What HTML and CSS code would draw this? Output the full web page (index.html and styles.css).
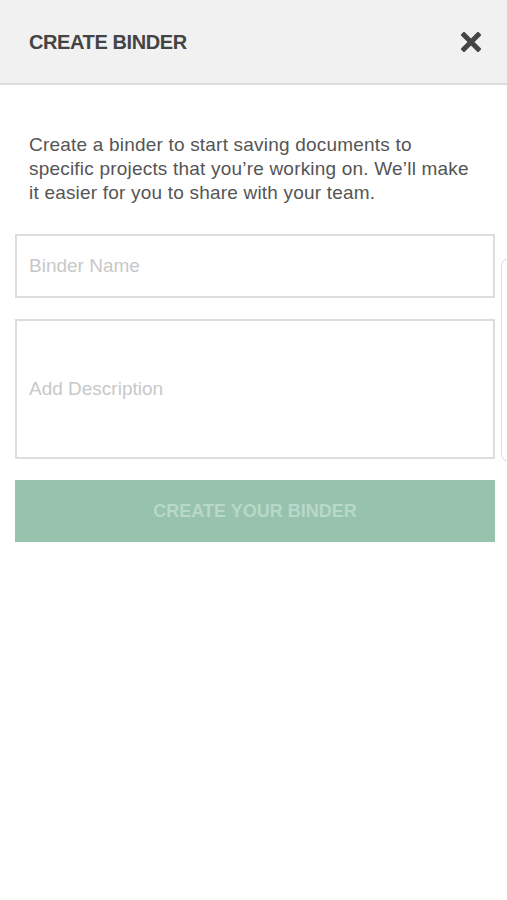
FILE: index.html
```html
<!DOCTYPE html>
<html lang="en">
<head>
    <meta charset="UTF-8">
    <meta name="viewport" content="width=device-width, initial-scale=1.0">
    <title>Create Binder</title>
    <link rel="stylesheet" href="styles.css">
</head>
<body>
    <header class="modal-header">
        <h1>CREATE BINDER</h1>
        <button class="close-btn" aria-label="Close">
            <svg width="20" height="20" viewBox="0 0 20 20">
                <path d="M3 3 L17 17 M17 3 L3 17" stroke="#444" stroke-width="5" stroke-linecap="square" fill="none"/>
            </svg>
        </button>
    </header>

    <form id="binderForm" class="binder-form">
        <p class="intro">Create a binder to start saving documents to<br>specific projects that you’re working on. We’ll make<br>it easier for you to share with your team.</p>

        <input type="text" id="binderName" placeholder="Binder Name">
        <div class="desc-box">
            <textarea id="binderDesc" placeholder="Add Description"></textarea>
        </div>

        <button type="submit" class="submit-btn">CREATE YOUR BINDER</button>
    </form>

    <div class="peek-card"></div>
</body>
</html>
```

FILE: styles.css
```css
body {
  margin: 0;
  background: #fff;
  font-family: "Liberation Sans", Arial, sans-serif;
  color: #555;
}

.modal-header {
  height: 83px;
  background: #f1f1f1;
  border-bottom: 2px solid #dcdcdc;
  display: flex;
  align-items: center;
  justify-content: space-between;
  padding: 0 26px 0 29px;
}

.modal-header h1 {
  margin: 2px 0 0 0;
  font-size: 20px;
  font-weight: bold;
  color: #444;
  letter-spacing: -0.4px;
}

.close-btn {
  background: none;
  border: none;
  padding: 0;
  width: 20px;
  height: 20px;
  cursor: pointer;
}

.binder-form {
  padding: 0 12px 0 15px;
  display: flex;
  flex-direction: column;
  gap: 21px;
}

.intro {
  margin: 48px 0 8px 14px;
  font-size: 19px;
  line-height: 24px;
  letter-spacing: 0.2px;
  color: #555;
  white-space: nowrap;
}

.binder-form input {
  height: 64px;
  box-sizing: border-box;
  border: 2px solid #ddd;
  padding: 0 12px;
  font-family: inherit;
  font-size: 19px;
  color: #555;
  outline: none;
}

.desc-box {
  height: 140px;
  box-sizing: border-box;
  border: 2px solid #ddd;
  display: flex;
  align-items: center;
}

.desc-box textarea {
  width: 100%;
  height: 22px;
  border: none;
  resize: none;
  padding: 0 12px;
  font-family: inherit;
  font-size: 19px;
  line-height: 22px;
  color: #555;
  outline: none;
  overflow: hidden;
}

.binder-form ::placeholder {
  color: #c8c8c8;
}

.submit-btn {
  height: 62px;
  background: #97c2ae;
  border: none;
  color: #b8d8c8;
  font-family: inherit;
  font-size: 18px;
  font-weight: bold;
  cursor: pointer;
}

.peek-card {
  position: absolute;
  left: 501px;
  top: 258px;
  width: 20px;
  height: 202px;
  border: 1px solid #ddd;
  border-radius: 8px;
}
```
